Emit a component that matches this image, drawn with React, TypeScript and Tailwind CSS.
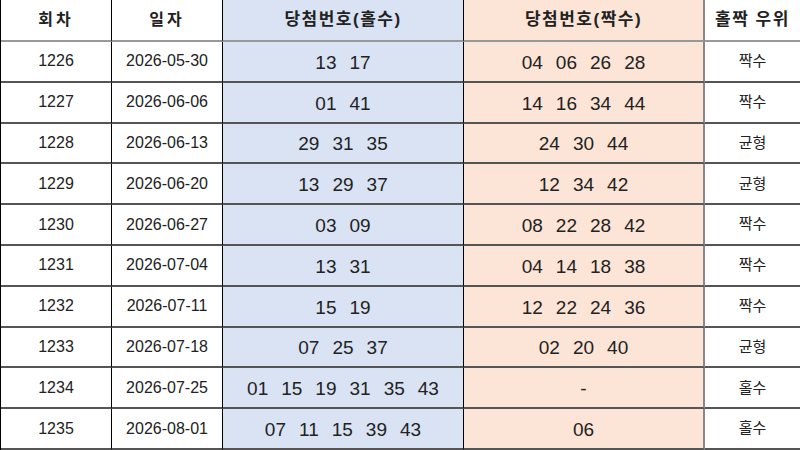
const rows = [
  { no: "1226", date: "2026-05-30", odd: ["13", "17"], even: ["04", "06", "26", "28"], lead: "짝수" },
  { no: "1227", date: "2026-06-06", odd: ["01", "41"], even: ["14", "16", "34", "44"], lead: "짝수" },
  { no: "1228", date: "2026-06-13", odd: ["29", "31", "35"], even: ["24", "30", "44"], lead: "균형" },
  { no: "1229", date: "2026-06-20", odd: ["13", "29", "37"], even: ["12", "34", "42"], lead: "균형" },
  { no: "1230", date: "2026-06-27", odd: ["03", "09"], even: ["08", "22", "28", "42"], lead: "짝수" },
  { no: "1231", date: "2026-07-04", odd: ["13", "31"], even: ["04", "14", "18", "38"], lead: "짝수" },
  { no: "1232", date: "2026-07-11", odd: ["15", "19"], even: ["12", "22", "24", "36"], lead: "짝수" },
  { no: "1233", date: "2026-07-18", odd: ["07", "25", "37"], even: ["02", "20", "40"], lead: "균형" },
  { no: "1234", date: "2026-07-25", odd: ["01", "15", "19", "31", "35", "43"], even: ["-"], lead: "홀수" },
  { no: "1235", date: "2026-08-01", odd: ["07", "11", "15", "39", "43"], even: ["06"], lead: "홀수" },
];

const Nums = ({ list }: { list: string[] }) => (
  <div className="flex items-center justify-center gap-[13px] text-[19px] leading-none pt-[2px]">
    {list.map((n, i) => (
      <span key={i}>{n}</span>
    ))}
  </div>
);

export default function App() {
  return (
    <div
      className="w-[800px] h-[450px] overflow-hidden bg-white text-[#222]"
      style={{ fontFamily: '"Liberation Sans", "Noto Sans CJK KR", sans-serif' }}
    >
      <div className="grid h-[450px] grid-cols-[111px_111px_241px_241px_96px] grid-rows-[42px_repeat(10,minmax(0,1fr))] border-l border-black">
        <div className="flex items-center justify-center border-r border-b-2 border-r-black border-b-[#999] text-[16px] font-bold tracking-[3px]">회차</div>
        <div className="flex items-center justify-center border-r border-b-2 border-r-black border-b-[#999] text-[16px] font-bold tracking-[3px]">일자</div>
        <div className="flex items-center justify-center border-r border-b-2 border-r-black border-b-[#999] bg-[#dae3f3] text-[17px] font-bold tracking-[1.5px]">당첨번호(홀수)</div>
        <div className="flex items-center justify-center border-r-2 border-b-2 border-r-[#888] border-b-[#999] bg-[#fce4d6] text-[17px] font-bold tracking-[1.5px]">당첨번호(짝수)</div>
        <div className="flex items-center justify-center border-r border-b-2 border-r-[#ccc] border-b-[#999] text-[17px] font-bold tracking-[1.5px]">홀짝 우위</div>
        {rows.map((r) => (
          <div key={r.no} className="contents">
            <div className="flex items-center justify-center border-r border-b-2 border-r-black border-b-[#555] text-[16px]">{r.no}</div>
            <div className="flex items-center justify-center border-r border-b-2 border-r-black border-b-[#555] text-[16px]">{r.date}</div>
            <div className="flex items-center justify-center border-r border-b-2 border-r-black border-b-[#555] bg-[#dae3f3]">
              <Nums list={r.odd} />
            </div>
            <div className="flex items-center justify-center border-r-2 border-b-2 border-r-[#888] border-b-[#555] bg-[#fce4d6]">
              <Nums list={r.even} />
            </div>
            <div className="flex items-center justify-center border-r border-b-2 border-r-[#ccc] border-b-[#555] text-[15px]">{r.lead}</div>
          </div>
        ))}
      </div>
    </div>
  );
}
